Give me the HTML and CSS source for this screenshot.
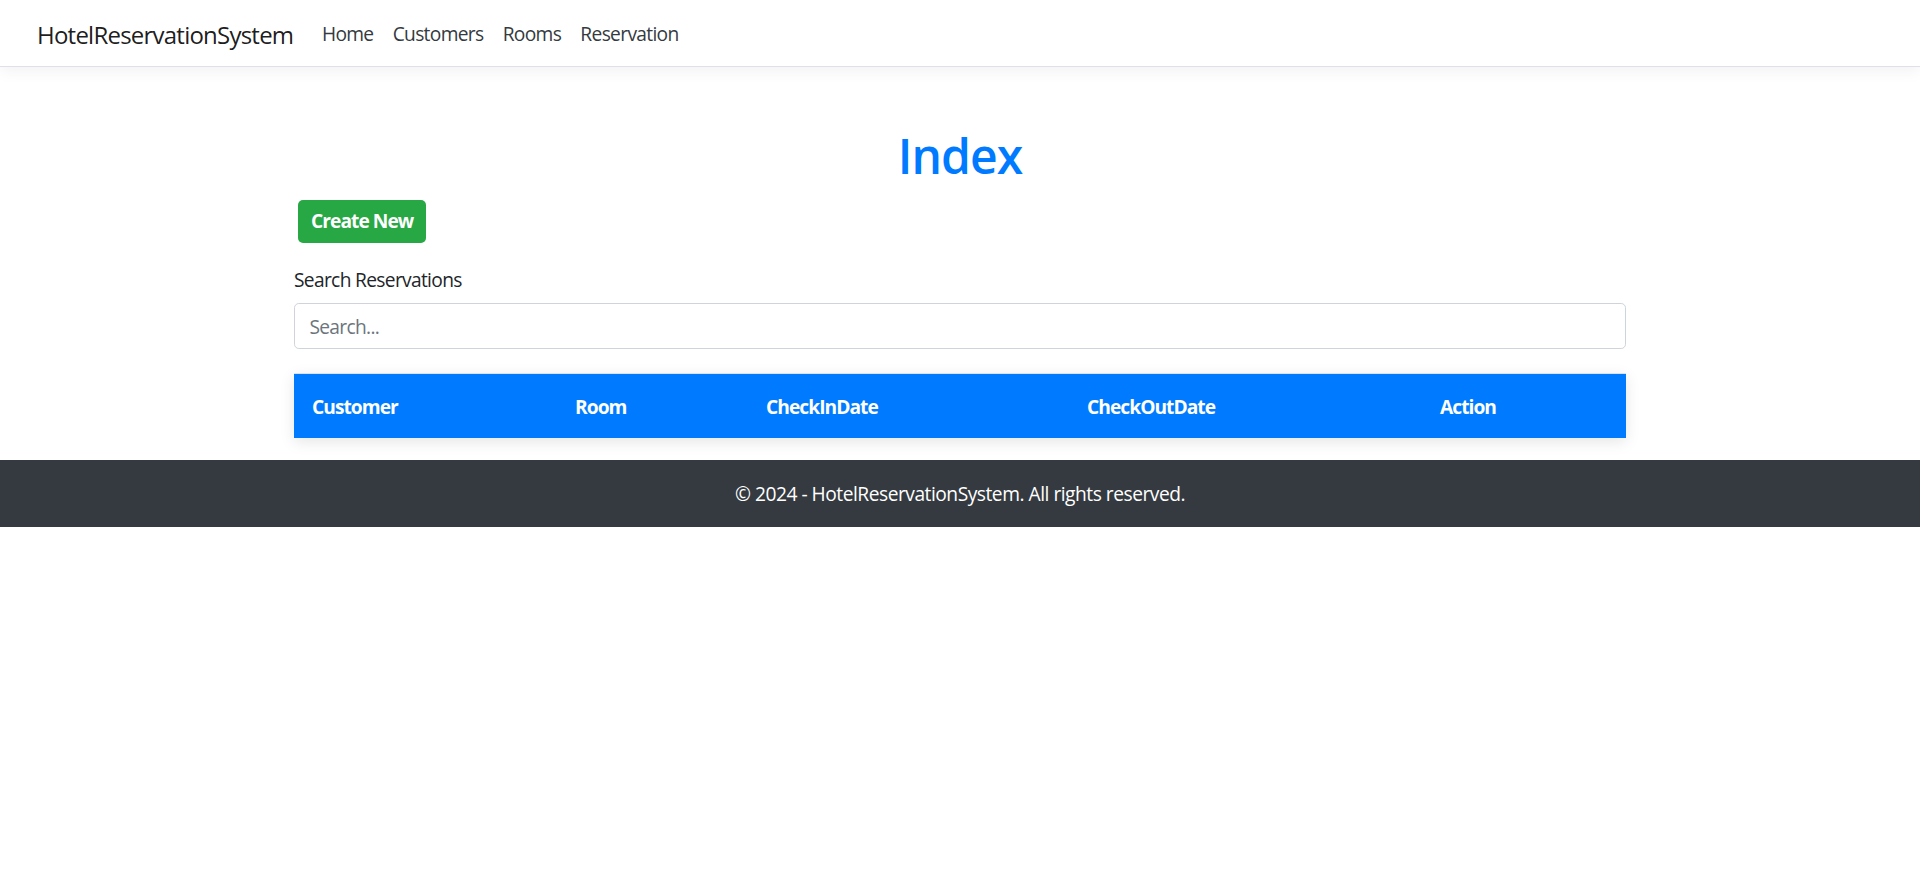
FILE: index.html
```html
<!DOCTYPE html>
<html lang="en">
<head>
<meta charset="utf-8">
<title>Index - HotelReservationSystem</title>
<link rel="stylesheet" href="styles.css">
</head>
<body>
<header>
  <nav class="navbar">
    <a class="brand" href="#">HotelReservationSystem</a>
    <ul class="nav-list">
      <li><a class="nav-link" href="#">Home</a></li>
      <li><a class="nav-link" href="#">Customers</a></li>
      <li><a class="nav-link" href="#">Rooms</a></li>
      <li><a class="nav-link" href="#">Reservation</a></li>
    </ul>
  </nav>
</header>
<main class="container">
  <h1 class="title">Index</h1>
  <p class="actions"><a class="btn-create" href="#">Create New</a></p>
  <div class="form-group">
    <label class="search-label" for="search">Search Reservations</label>
    <input class="search-input" id="search" type="text" placeholder="Search...">
  </div>
  <table class="res-table">
    <thead>
      <tr>
        <th class="col-customer">Customer</th>
        <th class="col-room">Room</th>
        <th class="col-in">CheckInDate</th>
        <th class="col-out">CheckOutDate</th>
        <th class="col-action">Action</th>
      </tr>
    </thead>
    <tbody></tbody>
  </table>
</main>
<footer class="footer">© 2024 - HotelReservationSystem. All rights reserved.</footer>
</body>
</html>
```
FILE: styles.css
```css
* { box-sizing: border-box; }
html, body { margin: 0; padding: 0; }
body {
  font-family: "Open Sans", "Noto Sans", sans-serif;
  font-size: 19.2px;
  line-height: 1.5;
  letter-spacing: -0.035em;
  color: #212529;
  background: #fff;
}
a { text-decoration: none; }

.navbar {
  height: 67px;
  display: flex;
  align-items: center;
  padding: 0 37px;
  background: #fff;
  border-bottom: 1px solid #dee2e6;
  box-shadow: 0 5px 14px rgba(0,0,0,.05);
}
.brand {
  font-size: 24px;
  color: rgba(0,0,0,.9);
  margin-right: 19px;
  line-height: 36px;
  letter-spacing: -0.032em;
  padding-top: 3px;
}
.nav-list {
  display: flex;
  list-style: none;
  margin: 0;
  padding: 3px 0 0;
}
.nav-link {
  display: block;
  padding: 0 9.6px;
  color: #343a40;
  line-height: 28.8px;
}

.container {
  width: 1332px;
  margin: 0 auto;
  padding-top: 60px;
}
.title {
  margin: 0;
  text-align: center;
  color: #007bff;
  font-size: 48px;
  font-weight: 600;
  line-height: 57.6px;
  letter-spacing: -0.02em;
}
.actions {
  margin: 15px 0 0 4px;
}
.btn-create {
  display: inline-flex;
  align-items: center;
  height: 43px;
  padding: 0 13px;
  background: #28a745;
  color: #fff;
  font-weight: 700;
  letter-spacing: -0.05em;
  border-radius: 5px;
}
.form-group { margin-top: 23px; }
.search-label {
  display: block;
  margin-bottom: 9px;
}
.search-input {
  display: block;
  width: 100%;
  height: 45.6px;
  padding: 0 14.4px;
  font: inherit;
  letter-spacing: -0.035em;
  color: #495057;
  border: 1px solid #ced4da;
  border-radius: 4.8px;
  background: #fff;
}
.search-input::placeholder { color: #6c757d; }

.res-table {
  width: 100%;
  margin-top: 24px;
  border-collapse: collapse;
  box-shadow: 0 4px 14px rgba(0,0,0,.1);
}
.res-table th {
  background: #007bff;
  color: #fff;
  font-weight: 700;
  letter-spacing: -0.05em;
  text-align: left;
  padding: 19px 18px 17px;
  line-height: 28px;
  border-top: 1px solid #dee2e6;
}
.col-customer { width: 263px; }
.col-room { width: 191px; }
.col-in { width: 321px; }
.col-out { width: 353px; }
.col-action { width: 204px; }

.footer {
  margin-top: 22px;
  height: 67px;
  line-height: 67px;
  background: #343a40;
  color: #fff;
  text-align: center;
  letter-spacing: -0.025em;
}
```
